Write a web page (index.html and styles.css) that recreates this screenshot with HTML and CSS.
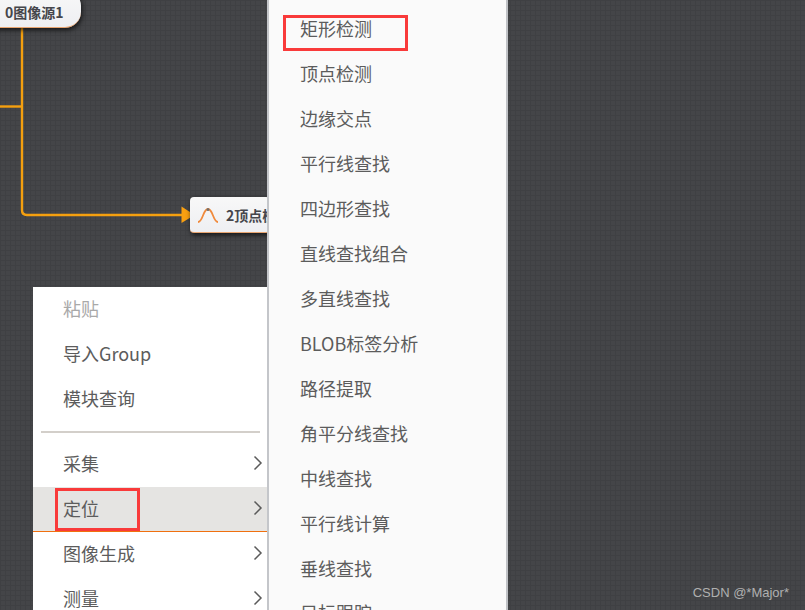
FILE: index.html
```html
<!DOCTYPE html>
<html lang="zh">
<head>
<meta charset="utf-8">
<title>流程编辑</title>
<link rel="stylesheet" href="styles.css">
</head>
<body>
<main class="canvas">
  <svg class="wires" width="805" height="610" viewBox="0 0 805 610" aria-hidden="true">
    <path class="wire" d="M22 28V210Q22 215 27 215H184"/>
    <path class="wire" d="M0 106.500H22"/>
    <path class="arrow" d="M181.500 206.500L194.500 215L181.500 223Z"/>
  </svg>

  <div class="node node-source"><span class="node-label">0图像源1</span></div>
  <div class="node node-peak">
    <svg class="peak-icon" width="22" height="16" viewBox="0 0 22 16" aria-hidden="true">
      <path d="M1 15C6 15 6 2 11 2S16 15 21 15" fill="none" stroke="#f08a3c" stroke-width="1.800"/>
      <circle cx="11" cy="2.500" r="1.500" fill="#77706a"/>
    </svg>
    <span class="node-label">2顶点检测</span>
  </div>

  <nav class="menu menu-main">
    <div class="item disabled">粘贴</div>
    <div class="item">导入Group</div>
    <div class="item">模块查询</div>
    <div class="divider"></div>
    <div class="item">采集<svg class="chev" width="10" height="16" viewBox="0 0 10 16"><path d="M1.500 1.500L8 8L1.500 14.500"/></svg></div>
    <div class="item active">定位<svg class="chev" width="10" height="16" viewBox="0 0 10 16"><path d="M1.500 1.500L8 8L1.500 14.500"/></svg></div>
    <div class="item">图像生成<svg class="chev" width="10" height="16" viewBox="0 0 10 16"><path d="M1.500 1.500L8 8L1.500 14.500"/></svg></div>
    <div class="item">测量<svg class="chev" width="10" height="16" viewBox="0 0 10 16"><path d="M1.500 1.500L8 8L1.500 14.500"/></svg></div>
  </nav>

  <nav class="menu menu-sub">
    <div class="item first">矩形检测</div>
    <div class="item">顶点检测</div>
    <div class="item">边缘交点</div>
    <div class="item">平行线查找</div>
    <div class="item">四边形查找</div>
    <div class="item">直线查找组合</div>
    <div class="item">多直线查找</div>
    <div class="item">BLOB标签分析</div>
    <div class="item">路径提取</div>
    <div class="item">角平分线查找</div>
    <div class="item">中线查找</div>
    <div class="item">平行线计算</div>
    <div class="item">垂线查找</div>
    <div class="item">目标跟踪</div>
  </nav>

  <div class="watermark">CSDN @*Major*</div>
</main>
</body>
</html>
```
FILE: styles.css
```css
html, body {
  margin: 0;
  padding: 0;
  width: 805px;
  height: 610px;
  overflow: hidden;
  background: #444548;
}

.canvas {
  position: relative;
  width: 805px;
  height: 610px;
  overflow: hidden;
  font-family: "Noto Sans CJK SC", "Liberation Sans", sans-serif;
  background-color: #444548;
  background-image:
    linear-gradient(#3f4043 1px, transparent 1px),
    linear-gradient(90deg, #3f4043 1px, transparent 1px);
  background-size: 5px 5px;
}

.wires {
  position: absolute;
  left: 0;
  top: 0;
}

.wire {
  fill: none;
  stroke: #f5a00f;
  stroke-width: 2.400;
}

.arrow {
  fill: #f9a011;
}

.node {
  position: absolute;
  box-sizing: border-box;
  display: flex;
  align-items: center;
  overflow: hidden;
  background: linear-gradient(#f8f8f8, #eeeff2);
  border-bottom: 1px solid #e8a571;
  box-shadow: 1px 2px 5px rgba(0, 0, 0, 0.7);
  color: #45464b;
  font-size: 14px;
  font-weight: 700;
  white-space: nowrap;
}

.node-source {
  left: -30px;
  top: -10px;
  width: 111px;
  height: 38px;
  padding: 6px 0 0 35px;
  border-radius: 0 16px 16px 0;
}

.node-peak {
  left: 190px;
  top: 197px;
  width: 80px;
  height: 36px;
  padding-left: 7px;
  gap: 7px;
  border-radius: 4px;
}

.peak-icon {
  flex: none;
}

.menu {
  position: absolute;
  box-sizing: border-box;
  overflow: hidden;
  color: #5c5c5c;
  font-size: 18px;
}

.menu-main {
  left: 33px;
  top: 287px;
  width: 234px;
  height: 323px;
  background: #fff;
}

.menu-sub {
  left: 267px;
  top: 0;
  width: 241px;
  height: 610px;
  padding-top: 6px;
  background: #fafafa;
  border-left: 2px solid #c4c6ca;
  border-right: 2px solid #bfc1c5;
}

.item {
  position: relative;
  box-sizing: border-box;
  display: flex;
  align-items: center;
  justify-content: space-between;
  height: 45px;
  padding: 0 4px 4px 30px;
  white-space: nowrap;
}

.menu-sub .item {
  height: 44.930px;
  padding: 0 4px 0 31px;
}

.disabled {
  color: #a9a9a9;
}

.divider {
  height: 2px;
  margin: 9px 7px 9px 8px;
  background: #d3cfca;
}

.active {
  padding-bottom: 3px;
  background: #e5e4e2;
  border-bottom: 1px solid #f0700f;
}

.active::after {
  content: "";
  position: absolute;
  left: 22px;
  top: 1px;
  box-sizing: border-box;
  width: 85px;
  height: 43px;
  border: 3px solid #f93a3a;
}

.first::after {
  content: "";
  position: absolute;
  left: 14px;
  top: 9px;
  box-sizing: border-box;
  width: 125px;
  height: 36px;
  border: 3px solid #f93a3a;
}

.chev {
  flex: none;
}

.chev path {
  fill: none;
  stroke: #5a5a5a;
  stroke-width: 1.500;
}

.watermark {
  position: absolute;
  right: 16px;
  bottom: 10px;
  color: #b0b0b0;
  font-family: "Liberation Sans", sans-serif;
  font-size: 13px;
  line-height: 15px;
}
```
